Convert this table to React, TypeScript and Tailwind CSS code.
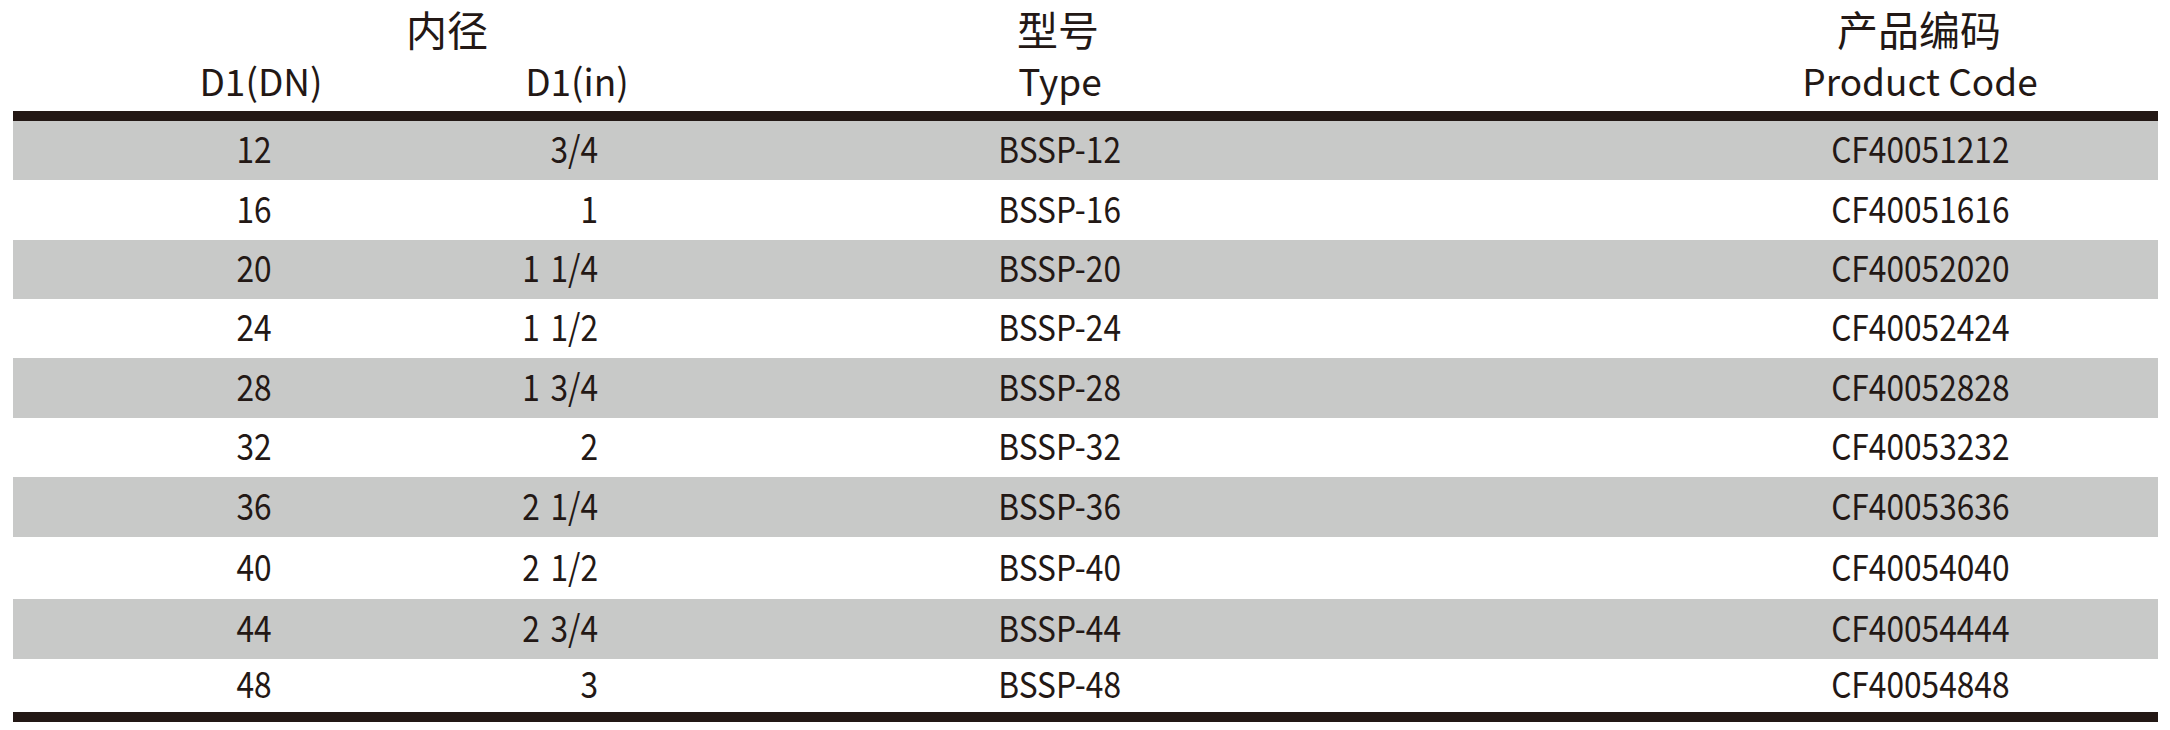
import React from "react";

const rows = [
  { dn: "12", inch: "3/4", type: "BSSP-12", code: "CF40051212", gray: true, h: "h-[59px]" },
  { dn: "16", inch: "1", type: "BSSP-16", code: "CF40051616", gray: false, h: "h-[60px]" },
  { dn: "20", inch: "1 1/4", type: "BSSP-20", code: "CF40052020", gray: true, h: "h-[59px]" },
  { dn: "24", inch: "1 1/2", type: "BSSP-24", code: "CF40052424", gray: false, h: "h-[59px]" },
  { dn: "28", inch: "1 3/4", type: "BSSP-28", code: "CF40052828", gray: true, h: "h-[60px]" },
  { dn: "32", inch: "2", type: "BSSP-32", code: "CF40053232", gray: false, h: "h-[59px]" },
  { dn: "36", inch: "2 1/4", type: "BSSP-36", code: "CF40053636", gray: true, h: "h-[60px]" },
  { dn: "40", inch: "2 1/2", type: "BSSP-40", code: "CF40054040", gray: false, h: "h-[62px]" },
  { dn: "44", inch: "2 3/4", type: "BSSP-44", code: "CF40054444", gray: true, h: "h-[60px]" },
  { dn: "48", inch: "3", type: "BSSP-48", code: "CF40054848", gray: false, h: "h-[53px]" },
];

const font = { fontFamily: '"Noto Sans CJK SC", "Noto Sans", sans-serif' };

function Cell({ children, className }: { children: React.ReactNode; className: string }) {
  return (
    <div className={className}>
      <span className="inline-block origin-center scale-x-[0.88] whitespace-pre">{children}</span>
    </div>
  );
}

export default function App() {
  return (
    <div className="w-[2170px] h-[730px] bg-white text-[#231815] pl-[13px]" style={font}>
      <div className="w-[2145px]">
        <div className="flex h-[57px] items-center text-[41px] leading-none">
          <div className="w-[868px] text-center">内径</div>
          <div className="w-[354px] text-center">型号</div>
          <div className="flex-1 pl-[445px] text-center">产品编码</div>
        </div>
        <div className="flex h-[54px] items-start pt-[5px] text-[37px] leading-none">
          <div className="w-[496px] text-center">D1(DN)</div>
          <div className="w-[136px] text-center">D1(in)</div>
          <div className="w-[830px] text-center">Type</div>
          <div className="flex-1 pl-[207px] text-center">Product Code</div>
        </div>
        <div className="h-[10px] bg-[#231815]" />
        {rows.map((r) => (
          <div
            key={r.dn}
            className={`flex items-center pb-[7px] text-[36px] leading-none ${r.h} ${r.gray ? "bg-[#c8c9c8]" : "bg-white"}`}
          >
            <Cell className="w-[482px] text-center">{r.dn}</Cell>
            <div className="w-[103px] text-right">
              <span className="inline-block origin-right scale-x-[0.88] whitespace-pre [word-spacing:4px]">{r.inch}</span>
            </div>
            <Cell className="w-[924px] text-center">{r.type}</Cell>
            <Cell className="flex-1 pl-[160px] text-center">{r.code}</Cell>
          </div>
        ))}
        <div className="h-[10px] bg-[#231815]" />
      </div>
    </div>
  );
}
